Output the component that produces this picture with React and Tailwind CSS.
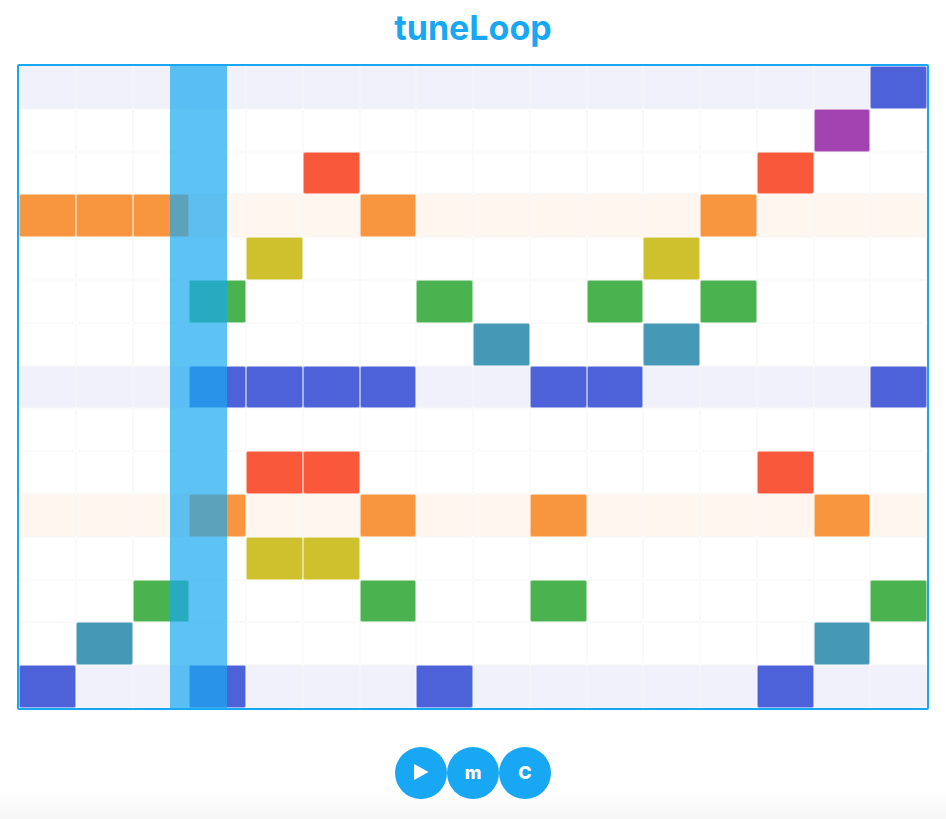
import { useState } from "react";

const palette = {
  indigo: { on: "bg-[#4d61d9]", off: "bg-[#f1f1fb]" },
  purple: { on: "bg-[#a342b1]", off: "bg-white" },
  red: { on: "bg-[#f9593a]", off: "bg-white" },
  orange: { on: "bg-[#f8953f]", off: "bg-[#fff6f0]" },
  yellow: { on: "bg-[#cfc12e]", off: "bg-white" },
  green: { on: "bg-[#4bb250]", off: "bg-white" },
  teal: { on: "bg-[#4599b6]", off: "bg-white" },
};

const rows = [
  { note: "C6", color: "indigo", steps: [15] },
  { note: "B5", color: "purple", steps: [14] },
  { note: "A5", color: "red", steps: [5, 13] },
  { note: "G5", color: "orange", steps: [0, 1, 2, 6, 12] },
  { note: "F5", color: "yellow", steps: [4, 11] },
  { note: "E5", color: "green", steps: [3, 7, 10, 12] },
  { note: "D5", color: "teal", steps: [8, 11] },
  { note: "C5", color: "indigo", steps: [3, 4, 5, 6, 9, 10, 15] },
  { note: "B4", color: "purple", steps: [] },
  { note: "A4", color: "red", steps: [4, 5, 13] },
  { note: "G4", color: "orange", steps: [3, 6, 9, 14] },
  { note: "F4", color: "yellow", steps: [4, 5] },
  { note: "E4", color: "green", steps: [2, 6, 9, 15] },
  { note: "D4", color: "teal", steps: [1, 14] },
  { note: "C4", color: "indigo", steps: [0, 3, 7, 13] },
];

const columns = Array.from({ length: 16 }, (_, i) => i);

function Cell({ row, column, active, onToggle }) {
  const shade = palette[row.color];
  return (
    <button
      type="button"
      aria-label={`${row.note}, step ${column + 1}`}
      aria-pressed={active}
      onClick={onToggle}
      className={`min-w-0 rounded-xs border ${
        active ? `border-white/50 ${shade.on}` : `border-[#f5f5f5]/50 ${shade.off}`
      }`}
    />
  );
}

function RoundButton({ label, onClick, children }) {
  return (
    <button
      type="button"
      aria-label={label}
      onClick={onClick}
      className="flex size-[52px] items-center justify-center rounded-full bg-[#18a8f3] text-lg font-extrabold text-white"
    >
      {children}
    </button>
  );
}

export default function App() {
  const [grid, setGrid] = useState(() =>
    rows.map((row) => columns.map((c) => row.steps.includes(c)))
  );
  const [position] = useState(2.66);

  const toggle = (r, c) =>
    setGrid((old) =>
      old.map((line, i) => (i === r ? line.map((v, j) => (j === c ? !v : v)) : line))
    );

  return (
    <div className="flex min-h-screen flex-col bg-white font-[Inter,'Liberation_Sans',Arial,sans-serif]">
      <h1 className="pt-1.5 pb-3.5 text-center text-[34px] leading-[44px] font-bold text-[#18a8f3]">
        tuneLoop
      </h1>
      <main className="px-[17px]">
        <div className="relative rounded-xs border-2 border-[#18a8f3]">
          <div className="grid h-[642px] auto-rows-fr grid-cols-16">
            {rows.map((row, r) =>
              columns.map((c) => (
                <Cell
                  key={`${r}-${c}`}
                  row={row}
                  column={c}
                  active={grid[r][c]}
                  onToggle={() => toggle(r, c)}
                />
              ))
            )}
          </div>
          <div
            className="pointer-events-none absolute inset-y-0 w-1/16 bg-[#18a8f0]/70"
            style={{ left: `${(position / 16) * 100}%` }}
          />
        </div>
      </main>
      <div className="flex flex-1 items-start justify-center bg-linear-to-t from-[#f7f7f7] to-white to-30% pt-[37px] pb-5">
        <RoundButton label="Play">
          <svg viewBox="0 0 16 18" className="h-[18px] w-4" fill="currentColor" aria-hidden="true">
            <path d="M1 0L15.5 8L1 16Z" />
          </svg>
        </RoundButton>
        <RoundButton label="Mode">m</RoundButton>
        <RoundButton label="Clear" onClick={() => setGrid(rows.map(() => columns.map(() => false)))}>
          C
        </RoundButton>
      </div>
    </div>
  );
}
